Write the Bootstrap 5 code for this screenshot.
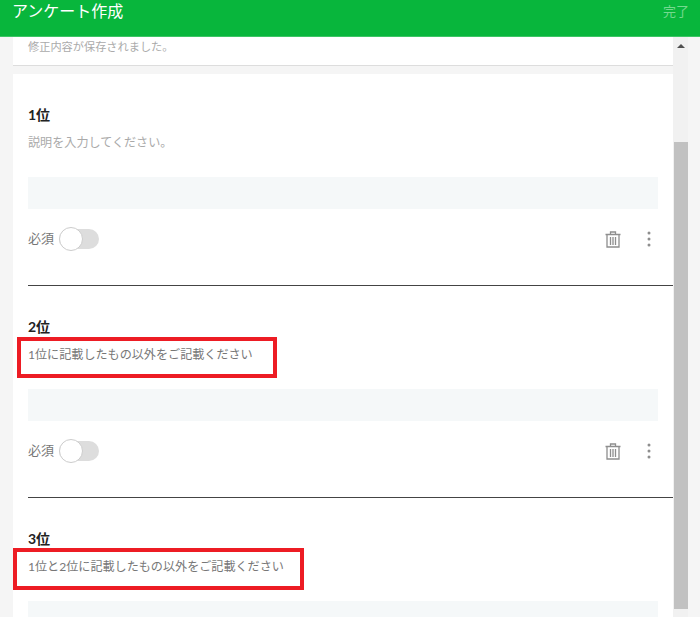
<!DOCTYPE html>
<html lang="ja">
<head>
<meta charset="utf-8">
<title>アンケート作成</title>
<link rel="stylesheet" href="https://cdn.jsdelivr.net/npm/bootstrap@5.3.0/dist/css/bootstrap.min.css">
<style>
html,body{height:617px;overflow:hidden}
body{background:#f5f5f5;font-family:Lato,"Noto Sans CJK JP",sans-serif;color:#666}
.top-bar{height:37px;background:#08b63c;border-bottom:1px solid #3cc565;padding:0 11px 0 13px;align-items:flex-start}
.top-title{font-size:16px;line-height:22px;color:#fff;margin-left:-1px}
.top-done{font-size:13px;line-height:22px;color:#74d98f}
.work{height:580px;overflow:hidden}
.pane{width:660px;margin-left:13px}
.saved-note{height:28px;background:#fff;border-bottom:1px solid #ddd;padding:0 15px;font-size:11.2px;line-height:20px;color:#aaa;margin-bottom:8px;box-sizing:content-box}
.sheet{background:#fff}
.entry{position:relative;height:212px;padding:31px 0 0 15px}
.entry-rule{position:absolute;left:15px;right:0;bottom:0;border-top:1px solid #444}
.entry-title{font-size:14px;line-height:20px;font-weight:700;color:#222;margin:0 0 8px}
.entry-desc{font-size:12.1px;line-height:20px;margin:0 0 24px;color:#777}
.entry-desc.empty{color:#aaa}
.answer-box{width:630px;height:32px;background:#f5f8f9;margin-bottom:18px}
.req-row{width:630px;height:24px}
.req-label{font-size:13px;color:#777;line-height:22px;padding-bottom:3px}
.toggle{position:relative;width:40px;height:20px;margin-left:5px;background:#ddd;border-radius:10px}
.toggle-knob{position:absolute;left:0;top:-2px;width:24px;height:24px;background:#fff;border:1px solid #ccc;border-radius:50%}
.kebab-ico{margin-left:20px;margin-right:5px}
.mark-box{position:absolute;border:4px solid #ed1c24;pointer-events:none}
.mark-a{left:4px;top:51px;width:260px;height:41px}
.mark-b{left:0;top:50px;width:291px;height:42px}
.rail{width:15px;height:580px;background:#f1f1f1;position:relative;padding-left:1px}
.rail-arrow{width:0;height:0;border-left:4px solid transparent;border-right:4px solid transparent;border-bottom:4px solid #505050;margin:7px auto 0 3px}
.rail-thumb{width:14px;height:467px;background:#c1c1c1;margin-top:94px}
</style>
</head>
<body>
<header class="top-bar d-flex justify-content-between">
  <div class="top-title">アンケート作成</div>
  <div class="top-done">完了</div>
</header>
<div class="work d-flex">
  <main class="pane">
    <div class="saved-note">修正内容が保存されました。</div>
    <div class="sheet">
      <section class="entry">
        <h2 class="entry-title">1位</h2>
        <p class="entry-desc empty">説明を入力してください。</p>
        <div class="answer-box"></div>
        <div class="req-row d-flex align-items-center">
          <span class="req-label">必須</span>
          <span class="toggle"><span class="toggle-knob"></span></span>
          <svg class="ms-auto" width="16" height="17" viewBox="0 0 16 17" fill="none" stroke="#8e8e8e" stroke-width="1.3"><path d="M.5 3.5h15M5.5 3.5V1h5v2.5M2 3.5V16h12V3.5M5.5 6v8M8 6v8M10.5 6v8"/></svg>
          <svg class="kebab-ico" width="12" height="16" viewBox="0 0 12 16" fill="#8e8e8e"><circle cx="8" cy="2" r="1.5"/><circle cx="8" cy="8" r="1.5"/><circle cx="8" cy="14" r="1.5"/></svg>
        </div>
        <div class="entry-rule"></div>
      </section>
      <section class="entry">
        <h2 class="entry-title">2位</h2>
        <p class="entry-desc">1位に記載したもの以外をご記載ください</p>
        <div class="answer-box"></div>
        <div class="req-row d-flex align-items-center">
          <span class="req-label">必須</span>
          <span class="toggle"><span class="toggle-knob"></span></span>
          <svg class="ms-auto" width="16" height="17" viewBox="0 0 16 17" fill="none" stroke="#8e8e8e" stroke-width="1.3"><path d="M.5 3.5h15M5.5 3.5V1h5v2.5M2 3.5V16h12V3.5M5.5 6v8M8 6v8M10.5 6v8"/></svg>
          <svg class="kebab-ico" width="12" height="16" viewBox="0 0 12 16" fill="#8e8e8e"><circle cx="8" cy="2" r="1.5"/><circle cx="8" cy="8" r="1.5"/><circle cx="8" cy="14" r="1.5"/></svg>
        </div>
        <div class="entry-rule"></div>
        <div class="mark-box mark-a"></div>
      </section>
      <section class="entry">
        <h2 class="entry-title">3位</h2>
        <p class="entry-desc">1位と2位に記載したもの以外をご記載ください</p>
        <div class="answer-box"></div>
        <div class="mark-box mark-b"></div>
      </section>
    </div>
  </main>
  <div class="rail">
    <div class="rail-arrow"></div>
    <div class="rail-thumb"></div>
  </div>
</div>
<script src="https://cdn.jsdelivr.net/npm/bootstrap@5.3.0/dist/js/bootstrap.bundle.min.js"></script>
</body>
</html>
